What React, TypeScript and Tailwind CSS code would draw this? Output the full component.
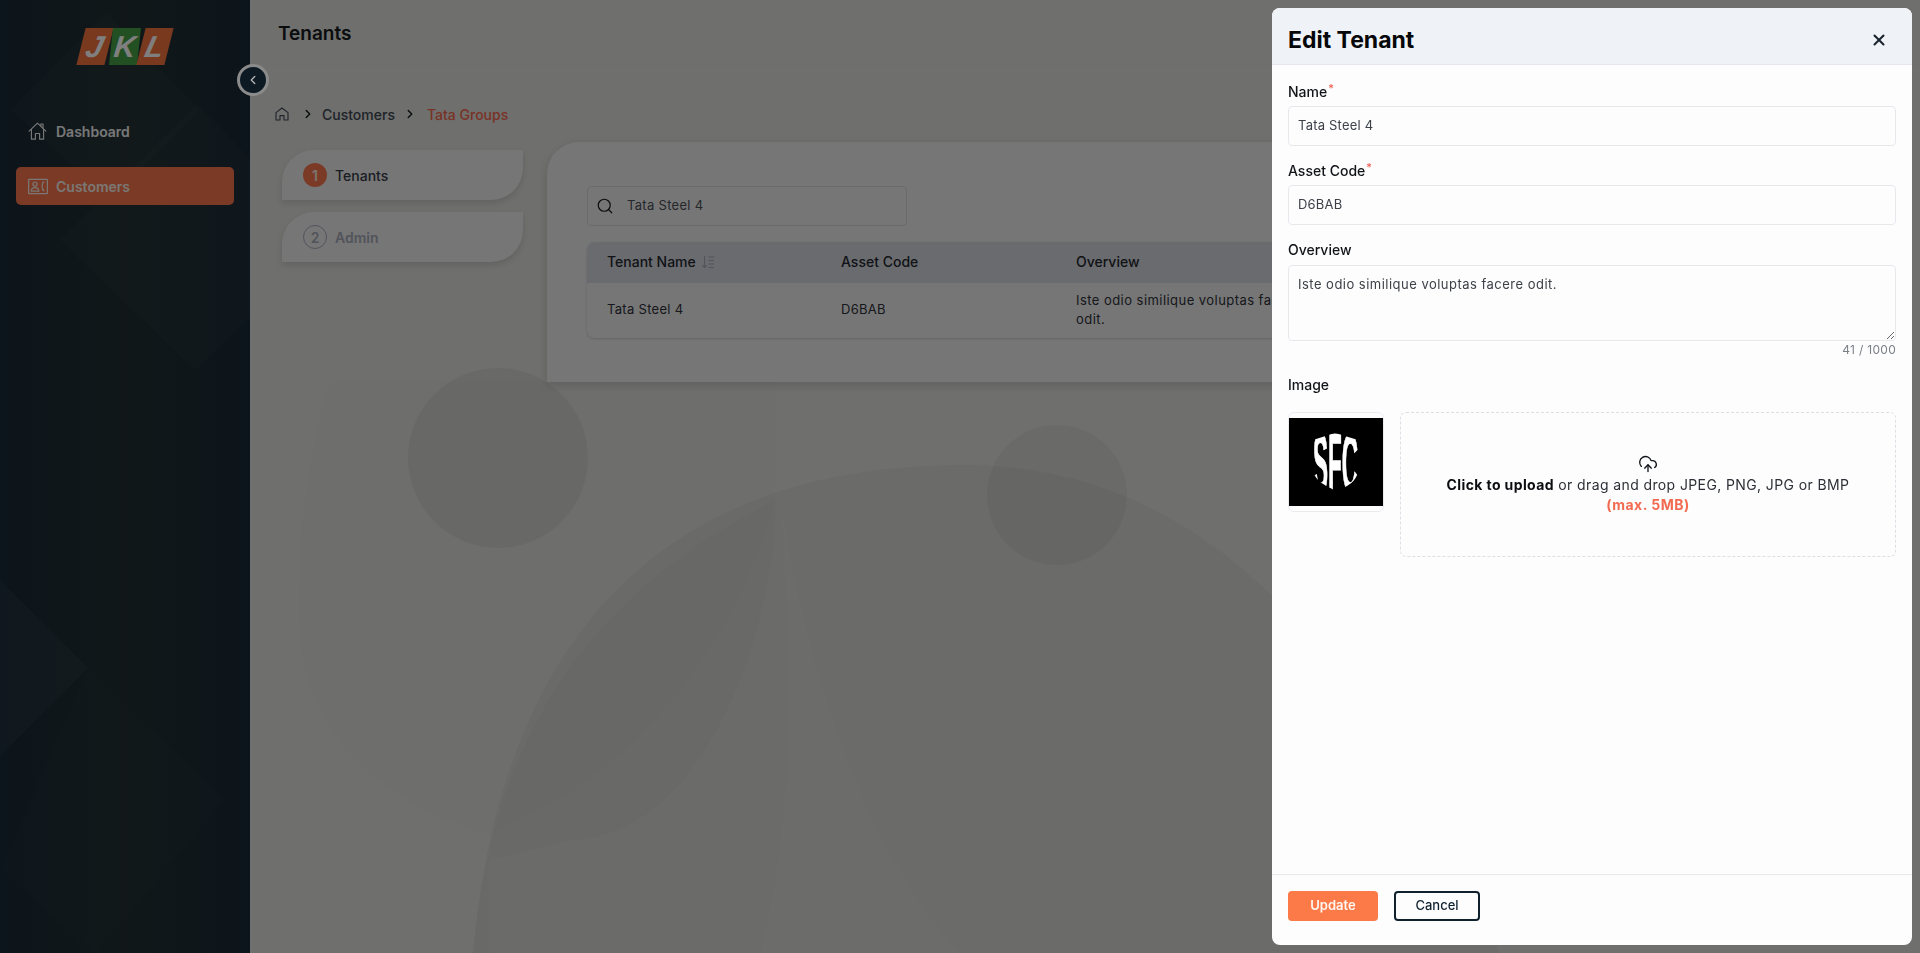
import { ChevronLeft, ChevronRight, CloudUpload, Search, X } from "lucide-react";

function Backdrop() {
  return (
    <svg className="absolute inset-0 w-full h-full" viewBox="0 0 1670 953" preserveAspectRatio="none" aria-hidden>
      <g transform="translate(-250 0)" fill="#000000">
        <path d="M298 600 C296 700 340 790 490 835 L540 810 C640 760 740 640 775 500 L775 382 L330 382 C310 440 300 520 298 600 Z" fillOpacity="0.006" />
        <circle cx="498" cy="458" r="90" fillOpacity="0.05" />
        <circle cx="1057" cy="495" r="70" fillOpacity="0.045" />
        <path d="M473 953 C490 760 570 465 963 465 C1200 465 1360 640 1500 953 Z" fillOpacity="0.035" />
        <path d="M776 500 C775 640 700 840 570 840 L490 860 L490 953 L473 953 C490 760 570 600 776 500 Z" fillOpacity="0.012" />
        <path d="M780 495 C800 640 860 850 960 953 L760 953 C800 800 790 640 780 495 Z" fill="#ffffff" fillOpacity="0.08" />
      </g>
    </svg>
  );
}

function SidebarPattern() {
  return (
    <svg className="absolute inset-0 w-full h-full" viewBox="0 0 250 953" preserveAspectRatio="none" aria-hidden>
      <g fill="#ffffff">
        <path d="M106 13 L200 110 L110 200 L11 110 Z" fillOpacity="0.018" />
        <path d="M197 104 L330 240 L195 370 L60 240 Z" fillOpacity="0.018" />
        <path d="M0 580 L88 668 L0 756 Z" fillOpacity="0.035" />
        <path d="M88 668 L225 800 L95 953 L0 870 Z" fillOpacity="0.01" />
      </g>
    </svg>
  );
}

function Logo() {
  return (
    <div className="flex justify-center gap-[2px] font-['Liberation_Sans',sans-serif] italic font-bold text-[30px] text-[#ffffff]">
      <span className="flex items-center justify-center w-[28px] h-[37px] -skew-x-[14deg] bg-[#f2733f]">J</span>
      <span className="flex items-center justify-center w-[28px] h-[37px] -skew-x-[6deg] bg-[#45a047]">K</span>
      <span className="flex items-center justify-center w-[28px] h-[37px] -skew-x-[14deg] bg-[#f2733f]">L</span>
    </div>
  );
}

function HouseIcon({ className }: { className?: string }) {
  return (
    <svg className={className} viewBox="0 0 20 20" fill="none" stroke="currentColor" strokeWidth="1.2" strokeLinejoin="round" strokeLinecap="round">
      <path d="M1.2 10.2 L10 1.8 L18.8 10.2" />
      <path d="M13.5 4.6 V2.6 H15.8 V7" />
      <path d="M3.6 8.4 V18.6 H7.8 V12.6 H12.2 V18.6 H16.4 V8.4" />
    </svg>
  );
}

function ContactIcon({ className }: { className?: string }) {
  return (
    <svg className={className} viewBox="0 0 20 16" fill="none" stroke="currentColor" strokeWidth="1.2">
      <rect x="0.6" y="0.8" width="18.8" height="14.4" rx="0.8" />
      <circle cx="7" cy="5.6" r="2.1" />
      <path d="M3.2 12.6 C3.4 10 5 9.2 7 9.2 C9 9.2 10.6 10 10.8 12.6 Z" />
      <path d="M15.6 3.6 C13.6 5.6 13.6 9.6 15.6 12" />
      <path d="M14.4 4.2 L16.2 3.2 M14.4 11.4 L16.2 12.6" />
    </svg>
  );
}

function SortIcon() {
  return (
    <svg className="w-[14px] h-[14px] text-[#a4a8b3]" viewBox="0 0 14 14" fill="none" stroke="currentColor" strokeWidth="1.1">
      <path d="M3.5 1 V12.5 M1.2 10.2 L3.5 12.5 L5.8 10.2" />
      <path d="M7.5 2 H13 M7.5 5.5 H13 M7.5 9 H13 M7.5 12.5 H13" />
    </svg>
  );
}

function SfcImage() {
  return (
    <svg className="w-[94px] h-[88px]" viewBox="0 0 94 88">
      <rect width="94" height="88" fill="#000000" />
      <defs>
        <clipPath id="shield">
          <path d="M24 22 L46 15 L69 22 L69 53 C68 63 58 69 48 73 C38 69 26 63 24 53 Z" />
        </clipPath>
      </defs>
      <g clipPath="url(#shield)">
        <text
          x="24"
          y="73"
          fill="#ffffff"
          stroke="#ffffff"
          strokeWidth="1.2"
          fontFamily="'Liberation Sans',sans-serif"
          fontWeight="700"
          fontSize="82"
          textLength="45"
          lengthAdjust="spacingAndGlyphs"
        >
          SFC
        </text>
      </g>
    </svg>
  );
}

function Field({ label, value, required }: { label: string; value: string; required?: boolean }) {
  return (
    <div className="flex flex-col">
      <label className="h-[20px] mb-[4px] text-[14px] leading-[20px] font-medium text-[#111418]">
        {label}
        {required && <sup className="text-[#ef5a4c] text-[11px] ml-[1px]">*</sup>}
      </label>
      <div className="flex items-center h-[40px] px-[9px] border border-[#e6e8ec] rounded-[4px] text-[13px] text-[#3c4148] tracking-[0.2px]">
        {value}
      </div>
    </div>
  );
}

function EditTenantDrawer() {
  return (
    <aside className="fixed top-2 right-2 bottom-2 w-[640px] flex flex-col bg-[#fdfdfe] rounded-[8px] overflow-hidden">
      <div className="flex items-center justify-between h-[57px] pl-[16px] pr-[24px] pt-[8px] bg-[#eff2f7] border-b border-[#e4e7ec]">
        <h2 className="text-[23px] font-bold text-[#050709]">Edit Tenant</h2>
        <X className="w-[18px] h-[18px] text-[#17222c]" strokeWidth={2.6} />
      </div>

      <div className="flex-1 flex flex-col px-[16px] pt-[17px]">
        <div className="flex flex-col gap-[15px]">
          <Field label="Name" value="Tata Steel 4" required />
          <Field label="Asset Code" value="D6BAB" required />
        </div>

        <label className="h-[20px] mt-[15px] mb-[5px] text-[14px] leading-[20px] font-medium text-[#111418]">Overview</label>
        <textarea
          readOnly
          value="Iste odio similique voluptas facere odit."
          className="h-[76px] px-[9px] py-[9px] border border-[#e6e8ec] rounded-[4px] text-[13px] text-[#3c4148] tracking-[0.48px] outline-none"
        />
        <div className="mt-[1px] text-right text-[12px] leading-[16px] text-[#7b8088] tracking-[0.3px]">41 / 1000</div>

        <label className="mt-[17px] text-[14px] leading-[20px] font-medium text-[#111418]">Image</label>

        <div className="flex gap-[16px] mt-[17px]">
          <div className="w-[96px] h-[100px] flex items-center justify-center border border-[#e9ebef] rounded-[6px] shrink-0">
            <SfcImage />
          </div>
          <div className="flex-1 h-[145px] flex flex-col items-center justify-center border border-dashed border-[#dcdfe4] rounded-[6px] text-[14px]">
            <CloudUpload className="w-[20px] h-[20px] text-[#111418]" strokeWidth={1.6} />
            <p className="leading-[21px] text-[#2c3036] tracking-[0.39px]">
              <span className="font-bold text-[#0b0d10]">Click to upload</span> or drag and drop JPEG, PNG, JPG or BMP
            </p>
            <p className="leading-[21px] font-bold text-[#f26a4f] tracking-[0.5px] -mt-[1px]">(max. 5MB)</p>
          </div>
        </div>
      </div>

      <div className="flex items-center gap-[16px] h-[71px] px-[16px] pb-[8px] border-t border-[#e8e9ec]">
        <button className="w-[90px] h-[30px] rounded-[4px] bg-[#fb7a48] text-[13px] font-semibold text-[#fff7f2]">Update</button>
        <button className="w-[86px] h-[30px] rounded-[4px] border-2 border-[#10212e] text-[13px] font-medium text-[#10212e]">Cancel</button>
      </div>
    </aside>
  );
}

function HomeCrumb() {
  return (
    <svg className="w-[14px] h-[14px] shrink-0 text-[#3d4650]" viewBox="0 0 14 14" fill="none" stroke="currentColor" strokeWidth="1.1" strokeLinejoin="round">
      <path d="M1 5.6 L7 1 L13 5.6 V13 H9 V8.6 H5 V13 H1 Z" />
    </svg>
  );
}

export default function App() {
  return (
    <div className="relative flex h-screen w-screen overflow-hidden bg-[#dededb] font-['Inter',sans-serif]">
      {/* Sidebar */}
      <nav className="relative w-[250px] shrink-0 bg-gradient-to-r from-[#192a38] via-[#222f31] to-[#192a38] overflow-hidden">
        <SidebarPattern />
        <div className="relative pt-[28px]">
          <Logo />
          <div className="mt-[47px] flex flex-col gap-[17px] px-[16px]">
            <div className="flex items-center gap-[9px] h-[38px] px-[12px] text-[14px] font-semibold text-[#f0f0f0]">
              <HouseIcon className="w-[19px] h-[20px] shrink-0" />
              Dashboard
            </div>
            <div className="flex items-center gap-[8px] h-[38px] px-[12px] rounded-[5px] bg-[#f4754a] text-[14px] font-semibold text-[#f5efe9]">
              <ContactIcon className="w-[20px] h-[17px] shrink-0" />
              Customers
            </div>
          </div>
        </div>
      </nav>

      {/* Main */}
      <main className="relative flex-1 min-w-0 flex flex-col">
        <Backdrop />
        <header className="relative h-[71px] shrink-0 flex items-center pl-[28px] pb-[1px] border-b border-[#e2e2e0]">
          <h1 className="text-[19px] font-semibold text-[#14181d]">Tenants</h1>
        </header>

        <div className="relative flex items-center h-[20px] mt-[33px] pl-[25px] text-[14px] font-medium text-[#3d4650]">
          <HomeCrumb />
          <ChevronRight className="w-[14px] h-[14px] ml-[12px] text-[#10161c]" strokeWidth={2.4} />
          <span className="ml-[7px]">Customers</span>
          <ChevronRight className="w-[14px] h-[14px] ml-[8px] text-[#10161c]" strokeWidth={2.4} />
          <span className="ml-[10px] text-[#f2664c]">Tata Groups</span>
        </div>

        <div className="relative flex items-start gap-[24px] mt-[18px] pl-[32px] pr-[32px]">
          {/* Steps */}
          <div className="w-[241px] mt-[8px] shrink-0 flex flex-col gap-[12px]">
            <div className="flex items-center gap-[8px] h-[50px] pl-[21px] bg-[#ededed] rounded-tl-[32px] rounded-br-[32px] shadow-[0_3px_6px_rgba(0,0,0,0.12)] text-[14px] font-medium text-[#343a46]">
              <span className="flex items-center justify-center w-[24px] h-[24px] rounded-full bg-[#f4754a] text-[#f7e9e2] font-semibold">1</span>
              Tenants
            </div>
            <div className="flex items-center gap-[8px] h-[50px] pl-[21px] bg-[#ededed] rounded-tl-[32px] rounded-br-[32px] shadow-[0_3px_6px_rgba(0,0,0,0.12)] text-[14px] font-semibold text-[#a4a8b6]">
              <span className="flex items-center justify-center w-[24px] h-[24px] rounded-full border border-[#a4a8b6] font-semibold">2</span>
              Admin
            </div>
          </div>

          {/* Card */}
          <section className="flex-1 min-w-0 h-[240px] px-[40px] pt-[44px] bg-[#ededed] rounded-tl-[32px] shadow-[0_3px_8px_rgba(0,0,0,0.14)]">
            <div className="flex items-center gap-[13px] w-[320px] h-[40px] px-[8px] border border-[#d4d5d8] rounded-[4px] text-[13px] text-[#4a4f57] tracking-[0.3px]">
              <Search className="w-[18px] h-[18px] text-[#14181d]" strokeWidth={1.6} />
              <span>Tata Steel 4</span>
            </div>

            <table className="w-full table-fixed mt-[16px] text-left text-[14px] rounded-[8px] overflow-hidden shadow-[0_1px_3px_rgba(0,0,0,0.16)]">
              <thead className="bg-[#d4d7df] text-[#23272e]">
                <tr className="h-[41px] font-medium">
                  <th className="w-[254px] pl-[20px] pb-[2px] font-medium">
                    <span className="flex items-center gap-[5px]">
                      Tenant Name
                      <SortIcon />
                    </span>
                  </th>
                  <th className="w-[235px] pb-[2px] font-medium">Asset Code</th>
                  <th className="pb-[2px] font-medium">Overview</th>
                </tr>
              </thead>
              <tbody className="text-[#2c3037] text-[13px] tracking-[0.45px]">
                <tr className="h-[55px]">
                  <td className="pl-[20px] pb-[2px] tracking-[0.3px]">Tata Steel 4</td>
                  <td className="pb-[2px] tracking-[0.3px]">D6BAB</td>
                  <td className="pb-[2px] leading-[19px]">
                    <div className="w-[235px]">Iste odio similique voluptas facere odit.</div>
                  </td>
                </tr>
              </tbody>
            </table>
          </section>
        </div>
      </main>

      {/* Modal layer */}
      <div className="fixed inset-0 bg-black/50" />

      <button className="fixed left-[237px] top-[64px] flex items-center justify-center w-[32px] h-[32px] rounded-full bg-[#0d1a24] border-[3px] border-[#8b8b8b]">
        <ChevronLeft className="w-[14px] h-[14px] text-[#b6b6b6]" strokeWidth={2.2} />
      </button>

      <EditTenantDrawer />
    </div>
  );
}
